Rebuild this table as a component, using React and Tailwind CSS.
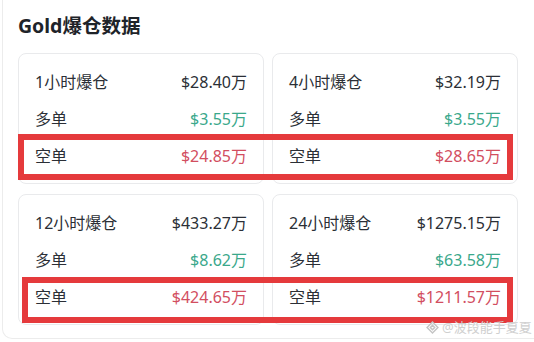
const cards = [
  { label: "1小时爆仓", total: "$28.40万", long: "$3.55万", short: "$24.85万" },
  { label: "4小时爆仓", total: "$32.19万", long: "$3.55万", short: "$28.65万" },
  { label: "12小时爆仓", total: "$433.27万", long: "$8.62万", short: "$424.65万" },
  { label: "24小时爆仓", total: "$1275.15万", long: "$63.58万", short: "$1211.57万" },
];

function Row({ label, value, color }) {
  return (
    <div className="h-[37px] flex items-center justify-between">
      <span className="text-[#2b2f36]">{label}</span>
      <span className={color}>{value}</span>
    </div>
  );
}

function LiqCard({ card }) {
  return (
    <div className="border border-[#e9eaec] rounded-lg py-[9px] px-4 text-[16px]">
      <Row label={card.label} value={card.total} color="text-[#2b2f36]" />
      <Row label="多单" value={card.long} color="text-[#3aa88b]" />
      <Row label="空单" value={card.short} color="text-[#d24e5f]" />
    </div>
  );
}

export default function App() {
  return (
    <div
      className="relative w-[534px] h-[342px] bg-white overflow-hidden"
      style={{ fontFamily: '"Noto Sans", "Noto Sans CJK SC", sans-serif' }}
    >
      <div className="ml-[2px] h-[339px] border-l border-b border-[#ececec] rounded-bl-[10px] pl-[15px] pt-[12px]">
        <h2 className="text-[19.5px] leading-[28px] font-bold text-[#1e2329]">
          Gold爆仓数据
        </h2>
        <div className="mt-[13px] w-[500px] grid grid-cols-2 gap-x-2 gap-y-[10px]">
          {cards.map((c) => (
            <LiqCard key={c.label} card={c} />
          ))}
        </div>
      </div>

      {/* red annotation boxes */}
      <div className="absolute left-[18px] top-[134px] w-[495px] h-[46px] border-[6px] border-[#e53a3c]" />
      <div className="absolute left-[22px] top-[277px] w-[491px] h-[46px] border-[6px] border-[#e53a3c]" />

      {/* watermark */}
      <div className="absolute left-[426px] top-[318px] flex items-center gap-[3px] text-[13px] text-[#cfcfcf]">
        <svg width="13" height="13" viewBox="0 0 12 12" fill="none" stroke="#c4c4c4" strokeWidth="1.3">
          <path d="M6 1 L11 6 L6 11 L1 6 Z" />
          <path d="M6 4 L8 6 L6 8 L4 6 Z" />
        </svg>
        <span>@波段能手夏夏</span>
      </div>
    </div>
  );
}
